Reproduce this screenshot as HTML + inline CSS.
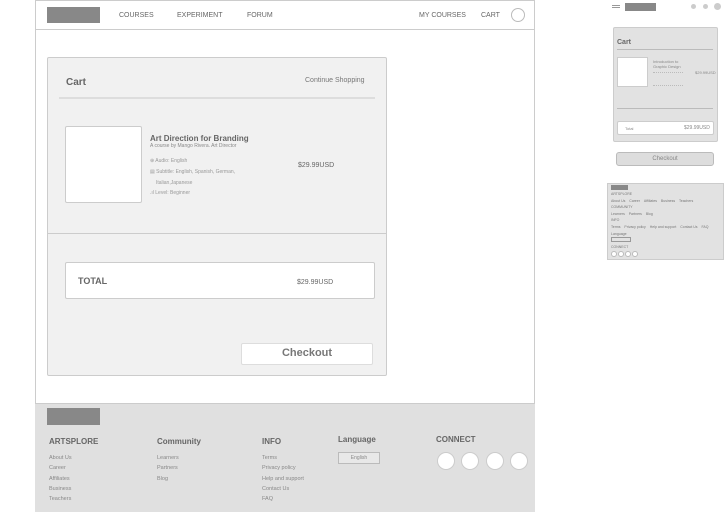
<!DOCTYPE html>
<html><head><style>
*{margin:0;padding:0;box-sizing:border-box}
body{width:724px;height:512px;background:#fff;font-family:"Liberation Sans",sans-serif;color:#666;position:relative;overflow:hidden}
.a{position:absolute}
.t{position:absolute;white-space:nowrap}
</style></head><body>
<div class="a" style="left:35px;top:0;width:500px;height:512px;border:1px solid #ccc;border-bottom:none"></div>
<div class="a" style="left:35px;top:29px;width:500px;height:1px;background:#ccc"></div>
<div class="a" style="left:47px;top:7px;width:53px;height:16px;background:#888"></div>
<div class="t" style="left:119px;top:12px;font-size:7px">COURSES</div>
<div class="t" style="left:177px;top:12px;font-size:7px">EXPERIMENT</div>
<div class="t" style="left:247px;top:12px;font-size:7px">FORUM</div>
<div class="t" style="left:419px;top:12px;font-size:7px">MY COURSES</div>
<div class="t" style="left:481px;top:12px;font-size:7px">CART</div>
<div class="a" style="left:511px;top:8px;width:14px;height:14px;border:1px solid #bbb;border-radius:50%"></div>

<div class="a" style="left:47px;top:57px;width:340px;height:319px;background:#f1f1f1;border:1px solid #ccc;border-radius:2px"></div>
<div class="t" style="left:66px;top:77px;font-size:10px;font-weight:bold;color:#666">Cart</div>
<div class="t" style="left:305px;top:77px;font-size:7px;color:#777">Continue Shopping</div>
<div class="a" style="left:59px;top:97px;width:316px;height:2px;background:#ddd"></div>
<div class="a" style="left:65px;top:126px;width:77px;height:77px;background:#fff;border:1px solid #ccc;border-radius:2px"></div>
<div class="t" style="left:150px;top:134px;font-size:8px;font-weight:bold;color:#666">Art Direction for Branding</div>
<div class="t" style="left:150px;top:143px;font-size:5px;color:#888">A course by Mango Rivera. Art Director</div>
<div class="t" style="left:150px;top:158px;font-size:5px;color:#999">⊕ Audio: English</div>
<div class="t" style="left:150px;top:169px;font-size:5px;color:#999">▤ Subtitle: English, Spanish, German,</div>
<div class="t" style="left:156px;top:180px;font-size:5px;color:#999">Italian,Japanese</div>
<div class="t" style="left:150px;top:190px;font-size:5px;color:#999">.ıl Level: Beginner</div>
<div class="t" style="left:298px;top:162px;font-size:7px;color:#666">$29.99USD</div>
<div class="a" style="left:48px;top:233px;width:338px;height:1px;background:#ccc"></div>
<div class="a" style="left:65px;top:262px;width:310px;height:37px;background:#fff;border:1px solid #ccc;border-radius:2px"></div>
<div class="t" style="left:78px;top:276px;font-size:9px;font-weight:bold;color:#666">TOTAL</div>
<div class="t" style="left:297px;top:279px;font-size:7px;color:#666">$29.99USD</div>
<div class="a" style="left:241px;top:343px;width:132px;height:22px;background:#fff;border:1px solid #ddd;border-radius:2px"></div>
<div class="t" style="left:241px;top:347px;width:132px;text-align:center;font-size:11px;font-weight:bold;color:#777">Checkout</div>

<div class="a" style="left:35px;top:403px;width:500px;height:109px;background:#e0e0e0;border-top:1px solid #ccc"></div>
<div class="a" style="left:47px;top:408px;width:53px;height:17px;background:#888"></div>
<div class="t" style="left:49px;top:437px;font-size:8px;font-weight:bold">ARTSPLORE</div>
<div class="t" style="left:49px;top:453px;font-size:5.5px;line-height:10.3px;color:#888">About Us<br>Career<br>Affiliates<br>Business<br>Teachers</div>
<div class="t" style="left:157px;top:437px;font-size:8px;font-weight:bold">Community</div>
<div class="t" style="left:157px;top:453px;font-size:5.5px;line-height:10.3px;color:#888">Learners<br>Partners<br>Blog</div>
<div class="t" style="left:262px;top:437px;font-size:8px;font-weight:bold">INFO</div>
<div class="t" style="left:262px;top:453px;font-size:5.5px;line-height:10.3px;color:#888">Terms<br>Privacy policy<br>Help and support<br>Contact Us<br>FAQ</div>
<div class="t" style="left:338px;top:435px;font-size:8px;font-weight:bold">Language</div>
<div class="a" style="left:338px;top:452px;width:42px;height:12px;border:1px solid #bbb;background:#e8e8e8"></div>
<div class="t" style="left:338px;top:455px;width:42px;text-align:center;font-size:5px;color:#888">English</div>
<div class="t" style="left:436px;top:435px;font-size:8px;font-weight:bold">CONNECT</div>
<div class="a" style="left:437px;top:452px;width:18px;height:18px;border-radius:50%;background:#fff;border:1px solid #ccc"></div>
<div class="a" style="left:461px;top:452px;width:18px;height:18px;border-radius:50%;background:#fff;border:1px solid #ccc"></div>
<div class="a" style="left:486px;top:452px;width:18px;height:18px;border-radius:50%;background:#fff;border:1px solid #ccc"></div>
<div class="a" style="left:510px;top:452px;width:18px;height:18px;border-radius:50%;background:#fff;border:1px solid #ccc"></div>

<div class="a" style="left:612px;top:5px;width:8px;height:1px;background:#999;box-shadow:0 2px 0 #999"></div>
<div class="a" style="left:625px;top:3px;width:31px;height:8px;background:#888"></div>
<div class="a" style="left:691px;top:4px;width:5px;height:5px;border-radius:50%;background:#ccc"></div>
<div class="a" style="left:703px;top:4px;width:5px;height:5px;border-radius:50%;background:#ccc"></div>
<div class="a" style="left:714px;top:3px;width:7px;height:7px;border-radius:50%;background:#ccc"></div>
<div class="a" style="left:613px;top:27px;width:105px;height:115px;background:#e2e2e2;border:1px solid #ccc;border-radius:2px"></div>
<div class="t" style="left:617px;top:39px;font-size:7px;font-weight:bold">Cart</div>
<div class="a" style="left:617px;top:49px;width:96px;height:1px;background:#bbb"></div>
<div class="a" style="left:617px;top:57px;width:31px;height:30px;background:#fff;border:1px solid #ccc"></div>
<div class="t" style="left:653px;top:59px;font-size:4px;line-height:5px;color:#888">Introduction to<br>Graphic Design</div>
<div class="a" style="left:653px;top:72px;width:30px;height:14px;border-top:1px dotted #bbb;border-bottom:1px dotted #bbb"></div>
<div class="t" style="left:695px;top:70px;font-size:4px;color:#888">$29.99USD</div>
<div class="a" style="left:617px;top:108px;width:96px;height:1px;background:#bbb"></div>
<div class="a" style="left:617px;top:121px;width:97px;height:14px;background:#fff;border:1px solid #ccc;border-radius:2px"></div>
<div class="t" style="left:625px;top:126px;font-size:4px;color:#888">Total</div>
<div class="t" style="left:684px;top:125px;font-size:5px;color:#888">$29.99USD</div>
<div class="a" style="left:616px;top:152px;width:98px;height:14px;background:#ddd;border:1px solid #bbb;border-radius:3px"></div>
<div class="t" style="left:616px;top:156px;width:98px;text-align:center;font-size:6px;color:#888">Checkout</div>
<div class="a" style="left:607px;top:183px;width:117px;height:77px;background:#e2e2e2;border:1px solid #ccc"></div>
<div class="a" style="left:611px;top:185px;width:17px;height:5px;background:#888"></div>
<div class="t" style="left:611px;top:191px;font-size:3.5px;line-height:6.6px;color:#777">ARTSPLORE<br>About Us&nbsp;&nbsp;&nbsp;&nbsp;Career&nbsp;&nbsp;&nbsp;&nbsp;Affiliates&nbsp;&nbsp;&nbsp;&nbsp;Business&nbsp;&nbsp;&nbsp;&nbsp;Teachers<br>COMMUNITY<br>Learners&nbsp;&nbsp;&nbsp;&nbsp;Partners&nbsp;&nbsp;&nbsp;&nbsp;Blog<br>INFO<br>Terms&nbsp;&nbsp;&nbsp;&nbsp;Privacy policy&nbsp;&nbsp;&nbsp;&nbsp;Help and support&nbsp;&nbsp;&nbsp;&nbsp;Contact Us&nbsp;&nbsp;&nbsp;&nbsp;FAQ<br>Language</div>
<div class="a" style="left:611px;top:237px;width:20px;height:5px;border:1px solid #999"></div>
<div class="t" style="left:611px;top:245px;font-size:3.5px;color:#777">CONNECT</div>
<div class="a" style="left:611px;top:251px;width:6px;height:6px;border-radius:50%;background:#fff;border:1px solid #bbb"></div>
<div class="a" style="left:618px;top:251px;width:6px;height:6px;border-radius:50%;background:#fff;border:1px solid #bbb"></div>
<div class="a" style="left:625px;top:251px;width:6px;height:6px;border-radius:50%;background:#fff;border:1px solid #bbb"></div>
<div class="a" style="left:632px;top:251px;width:6px;height:6px;border-radius:50%;background:#fff;border:1px solid #bbb"></div>
</body></html>
